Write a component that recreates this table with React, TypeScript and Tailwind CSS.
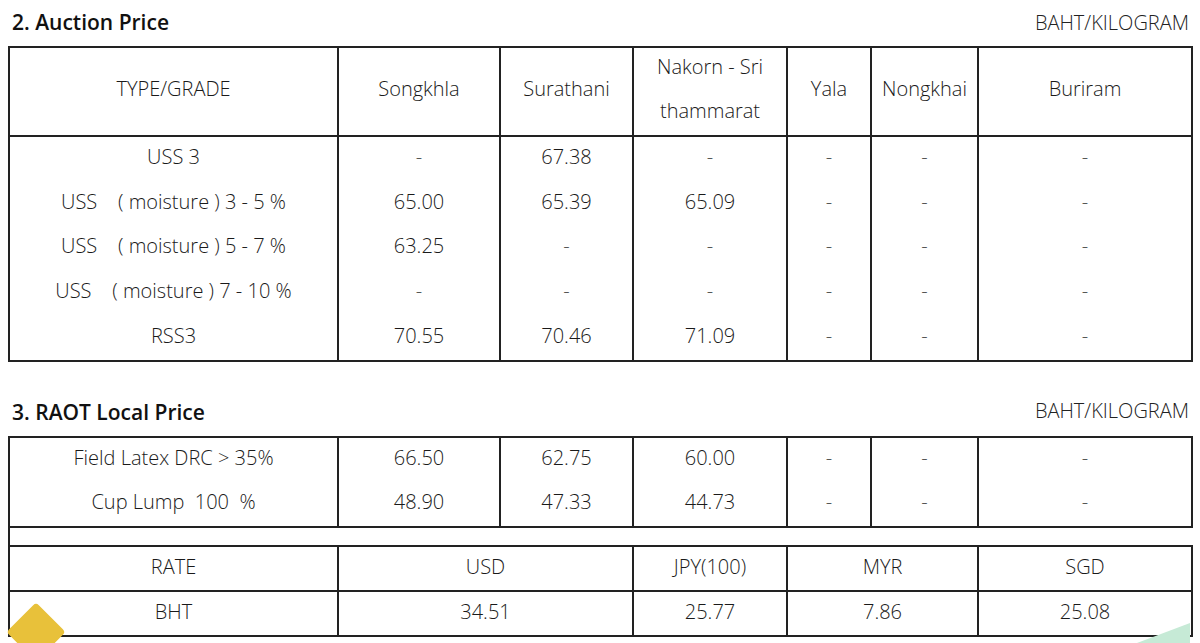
import React from "react";

const COLS1 = "grid grid-cols-[327px_162px_133px_154px_84px_107px_214px]";
const COLS2 = "grid grid-cols-[327px_295px_154px_191px_214px]";

const header1: string[][] = [
  ["TYPE/GRADE"],
  ["Songkhla"],
  ["Surathani"],
  ["Nakorn - Sri", "thammarat"],
  ["Yala"],
  ["Nongkhai"],
  ["Buriram"],
];

const auctionRows: string[][] = [
  ["USS 3", "-", "67.38", "-", "-", "-", "-"],
  ["USS    ( moisture ) 3 - 5 %", "65.00", "65.39", "65.09", "-", "-", "-"],
  ["USS    ( moisture ) 5 - 7 %", "63.25", "-", "-", "-", "-", "-"],
  ["USS    ( moisture ) 7 - 10 %", "-", "-", "-", "-", "-", "-"],
  ["RSS3", "70.55", "70.46", "71.09", "-", "-", "-"],
];

const localRows: string[][] = [
  ["Field Latex DRC > 35%", "66.50", "62.75", "60.00", "-", "-", "-"],
  ["Cup Lump  100  %", "48.90", "47.33", "44.73", "-", "-", "-"],
];

const rateHead = ["RATE", "USD", "JPY(100)", "MYR", "SGD"];
const rateVals = ["BHT", "34.51", "25.77", "7.86", "25.08"];

function Cell({ text }: { text: string }) {
  const isDash = text === "-";
  return (
    <div className="flex-1 flex items-center justify-center pb-[4px]">
      <span className={isDash ? "text-[#555]" : "text-[#1a1a1a]"}>{text}</span>
    </div>
  );
}

function Columns({ rows, h }: { rows: string[][]; h: string }) {
  const cols = rows[0].map((_, c) => rows.map((r) => r[c]));
  return (
    <div className={`${COLS1} ${h}`}>
      {cols.map((col, ci) => (
        <div
          key={ci}
          className={`flex flex-col whitespace-pre ${ci > 0 ? "border-l-2 border-[#222]" : ""}`}
        >
          {col.map((t, ri) => (
            <Cell key={ri} text={t} />
          ))}
        </div>
      ))}
    </div>
  );
}

export default function App() {
  return (
    <div className="relative w-[1200px] h-[643px] overflow-hidden bg-white font-['Open_Sans','Liberation_Sans',sans-serif] font-light text-[20px] text-[#1a1a1a]">
      {/* Section 2 title */}
      <div className="h-[46px] flex items-start justify-between pt-[9px] pl-[12px] pr-[11px]">
        <span className="text-[21px] font-semibold leading-[26px] text-[#111]">2. Auction Price</span>
        <span className="leading-[28px] text-[#222]">BAHT/KILOGRAM</span>
      </div>

      {/* Auction table */}
      <div className="ml-[8px] w-[1185px] border-2 border-[#222]">
        <div className={`${COLS1} grid-rows-[87px] h-[89px] border-b-2 border-[#222]`}>
          {header1.map((lines, i) => (
            <div
              key={i}
              className={`flex flex-col items-center justify-center leading-[44px] pb-[6px] ${i > 0 ? "border-l-2 border-[#222]" : ""}`}
            >
              {lines.map((l, j) => (
                <span key={j}>{l}</span>
              ))}
            </div>
          ))}
        </div>
        <Columns rows={auctionRows} h="h-[223px]" />
      </div>

      {/* Section 3 title */}
      <div className="h-[74px] flex items-end justify-between pb-[11px] pl-[12px] pr-[11px]">
        <span className="text-[21px] font-semibold leading-[26px] text-[#111]">3. RAOT Local Price</span>
        <span className="leading-[28px] text-[#222]">BAHT/KILOGRAM</span>
      </div>

      {/* Local price + rate */}
      <div className="ml-[8px] w-[1185px]">
        <div className="border-2 border-[#222] h-[92px]">
          <Columns rows={localRows} h="h-[88px]" />
        </div>
        <div className="h-[17px] border-l-2 border-[#222]" />
        <div className="border-2 border-[#222]">
          <div className={`${COLS2} h-[45px] border-b-2 border-[#222]`}>
            {rateHead.map((t, i) => (
              <div
                key={i}
                className={`flex items-center justify-center pb-[4px] ${i > 0 ? "border-l-2 border-[#222]" : ""}`}
              >
                {t}
              </div>
            ))}
          </div>
          <div className={`${COLS2} h-[43px]`}>
            {rateVals.map((t, i) => (
              <div
                key={i}
                className={`flex items-center justify-center pb-[4px] ${i > 0 ? "border-l-2 border-[#222]" : ""}`}
              >
                {t}
              </div>
            ))}
          </div>
        </div>
      </div>

      {/* Decorations */}
      <div className="absolute left-[15px] top-[611px] w-[42px] h-[42px] rotate-45 rounded-[4px] bg-[#E8C13A]" />
      <svg className="absolute left-[1137px] top-[620px]" width="56" height="23" viewBox="0 0 56 23">
        <polygon points="0,23 53,3 53,23" fill="#C6EAD6" />
      </svg>
    </div>
  );
}
